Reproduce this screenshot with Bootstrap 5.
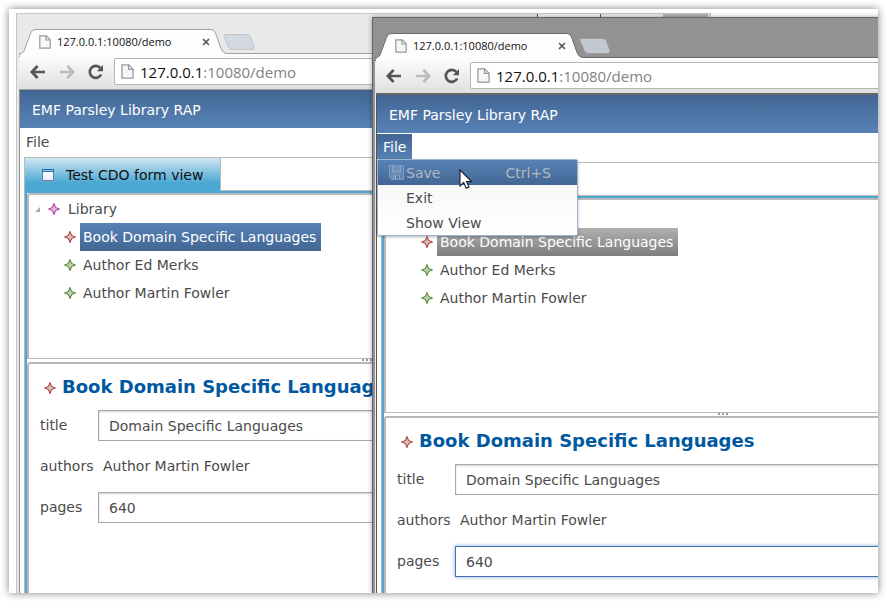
<!DOCTYPE html>
<html lang="en">
<head>
<meta charset="utf-8">
<meta name="viewport" content="width=device-width, initial-scale=1">
<title>EMF Parsley Library RAP</title>
<link href="https://cdn.jsdelivr.net/npm/bootstrap@5.3.0/dist/css/bootstrap.min.css" rel="stylesheet">
<style>
  :root { --line: #b9b9b9; --accent: #4ba8d3; --deep: #426694; --bright: #5882b5; }
  body { font: 14px/20px "DejaVu Sans", Verdana, sans-serif; color: #4b4b4b; background: #fff; padding: 9px 8px 8px 9px; }
  button { font: inherit; color: inherit; background: none; border: 0; padding: 0; }
  svg { display: block; flex: none; }

  .desk { background: #fff; box-shadow: 0 0 8px rgba(0,0,0,.5); }
  .win { position: absolute; width: 80%; bottom: 0; border: 1px solid var(--edge); border-bottom: 0; background: var(--frame); padding: 0 2px; }
  .win-back { left: 7px; top: 4px; --edge: #c6c6c6; --frame: #e9e9e9; --tabline: #a0a0a0; --knob: #d3d9e1; --knobline: #c0c4ca; --tree: 164px; }
  .win-front { left: 363px; top: 8px; --edge: #666; --frame: #929292; --tabline: #6c6c6c; --knob: #c3c9d1; --knobline: #9a9ea4; --tree: 213px; box-shadow: 0 0 5px rgba(0,0,0,.35); }

  /* browser chrome */
  .strip { height: 39px; padding-top: 15px; }
  .page-tab { width: 204px; height: 25px; margin-bottom: -1px; z-index: 1; padding: 0 13px 0 20px; font: 11px/24px "Open Sans", sans-serif; color: #111; gap: 6px; }
  .tab-shape { position: absolute; left: 0; top: 0; color: var(--tabline); }
  .tab-icon, .tab-text, .tab-close { position: relative; }
  .win-controls { height: 12px; margin-top: -15px; }
  .win-controls span { width: 63px; border-left: 1px solid #555; background: #ededed; }
  .win-controls span:last-child { width: 45px; border: 0; background: #b5b5b5; }
  .win-controls span:first-child { background: #f4f4f4; }
  .toolbar { height: 36px; border-top: 1px solid var(--tabline); background: linear-gradient(#fdfdfd, #e0e0e0); padding: 0 8px 0 11px; gap: 13px; }
  .omni { height: 27px; margin-left: -3px; border: 1px solid #b5b5b5; border-radius: 2px; background: #fff; padding-left: 6px; gap: 6px; font: 15px/24px "Open Sans", sans-serif; color: #828282; }
  .omni b { font-weight: 400; color: #111; }

  /* application */
  .app { background: #fff; border-top: 1px solid #a0a0a0; border-left: 1px solid #8f8f8f; }
  .win-front .app { border-top: 2px solid #666; border-left: 1px solid #555; box-shadow: -1px 0 #eee; margin-left: 1px; }
  .banner { height: 38px; padding-left: 12px; line-height: 40px; color: #fff; background: linear-gradient(var(--deep), var(--bright)); }
  .menubar { height: 29px; padding-top: 1px; }
  .menubar > button { height: 25px; padding: 0 6px; }
  .menubar > button[aria-expanded=true] { color: #fff; background: linear-gradient(var(--deep), var(--bright)); }
  .popup { position: absolute; left: 0; top: 26px; z-index: 3; width: 201px; border: 1px solid #9fb3cd; border-radius: 2px; background: linear-gradient(#f4f4f4, #fff); box-shadow: 0 1px 3px rgba(0,0,0,.3); }
  .popup button { display: flex; align-items: center; width: 100%; height: 25px; padding: 0 26px 0 28px; }
  .popup button:disabled { padding-left: 11px; gap: 2px; color: #b4b8be; background: linear-gradient(var(--bright), var(--deep)); }
  .pointer { position: absolute; left: 82px; top: 36px; z-index: 4; }

  .folder { margin-left: 4px; border-top: 1px solid var(--line); border-left: 1px solid var(--line); }
  .folder-strip { height: 33px; }
  .view-tab { width: 196px; padding-left: 17px; gap: 12px; border-right: 1px solid var(--line); color: #111; background: linear-gradient(#d0e6f1, var(--accent) 75%); }
  .view-tab + div { border-bottom: 1px solid var(--line); }
  .views { border-top: 2px solid var(--accent); border-left: 2px solid var(--accent); }
  .tree { height: calc(var(--tree) + 2px); border: 2px solid var(--line); border-width: 2px 0 1px 2px; border-radius: 3px 0 0 0; }
  .node { height: 28px; padding-left: 35px; gap: 4px; }
  .node:first-child { padding-left: 6px; gap: 8px; }
  .node .name { padding: 0 5px 0 3px; line-height: 28px; }
  .node.picked .name { color: #fff; background: linear-gradient(var(--bright), var(--deep)); }
  .win-front .node.picked .name { background: linear-gradient(#b0b0b0, #7e7e7e); }
  .sash { height: 3px; gap: 2px; padding-right: 2px; }
  .sash i { width: 2px; height: 2px; background: #999; }
  .details { border: 2px solid var(--line); border-width: 2px 0 0 2px; border-radius: 3px 0 0 0; padding: 0 12px 0 11px; }
  .details h1 { height: 46px; margin: 0; padding-left: 4px; gap: 6px; font-size: 18px; line-height: 44px; font-weight: 700; color: #00589f; }
  .details h1 svg { margin-top: 2px; }
  .fields { display: grid; grid-template-columns: 58px 1fr; gap: 10px 0; }
  .fields > * { height: 31px; line-height: 30px; }
  .fields input { min-width: 0; border: 1px solid #a7a7a7; border-radius: 0; padding: 0 10px; color: #4b4b4b; background: #fff; box-shadow: inset 0 1px 2px rgba(0,0,0,.18); outline: 0; }
  .fields input.active { border-color: #4474b0; box-shadow: 0 0 4px #7fa4d6; }
  .fields output { padding-left: 5px; }
</style>
</head>
<body class="vh-100 d-flex">
<svg width="0" height="0" class="position-absolute" aria-hidden="true">
  <defs>
    <linearGradient id="sheet" x1="0" y1="0" x2="0" y2="1"><stop offset="0" stop-color="#fff"/><stop offset="1" stop-color="#e6eef8"/></linearGradient>
    <symbol id="page" viewBox="0 0 12 14"><path d="M.8.8h6.4l4 4v8.4H.8z" fill="#f6f6f6" stroke="#999" stroke-width="1.2"/><path d="M7 .8v4.2h4.2" fill="none" stroke="#999" stroke-width="1.2"/></symbol>
    <symbol id="star" viewBox="0 0 12 12"><path d="M6 .6 7.6 4.400 11.4 6 7.6 7.600 6 11.4 4.4 7.600.6 6 4.4 4.400z" fill="currentColor" fill-opacity=".4" stroke="currentColor" stroke-width="1.1"/><path d="M6 3.500 8.500 6 6 8.500 3.500 6z" fill="#c9c6bf" fill-opacity=".8"/></symbol>
    <symbol id="arrow" viewBox="0 0 16 14"><path d="M7.6 1 1.8 7l5.8 6M2 7h13" fill="none" stroke="currentColor" stroke-width="2.7"/></symbol>
    <symbol id="reload" viewBox="0 0 16 16"><path d="M13.2 10.5A6 6 0 1 1 12.4 4" fill="none" stroke="currentColor" stroke-width="2.7"/><path d="M15 1v6.2H8.8z" fill="currentColor"/></symbol>
    <symbol id="cross" viewBox="0 0 8 8"><path d="m1 1 6 6M7 1 1 7" stroke="#555" stroke-width="1.7"/></symbol>
    <symbol id="tabshape" viewBox="0 0 214 28"><path d="M0 28V26.5C0 24 4 24.5 5 22L11.5 4.5Q13 .5 16 .5H192Q195 .5 196.500 4L202 19.5Q204 24.5 208 24.5V28z" fill="#fdfdfd"/><path d="M.5 28V26.5C.5 24 4 24.5 5 22L11.5 4.5Q13 .5 16 .5H192Q195 .5 196.500 4L202 19.5Q204 24.5 208 24.5" fill="none" stroke="currentColor"/></symbol>
    <symbol id="view" viewBox="0 0 12 12"><path d="M.5.5h11v11H.5z" fill="url(#sheet)" stroke="#6f7f90"/><path d="M0 0h12v3H0z" fill="#2667b8"/><path d="M1 1.500h10" stroke="#9cc4ef" stroke-width="1"/></symbol>
  </defs>
</svg>

<main class="desk position-relative overflow-hidden flex-grow-1">
  <section class="win win-back d-flex flex-column" aria-label="Browser window, 127.0.0.1:10080/demo">
    <div class="strip d-flex">
      <div class="page-tab position-relative d-flex align-items-center">
        <svg class="tab-shape" width="214" height="28"><use href="#tabshape"/></svg>
        <svg class="tab-icon" width="12" height="14"><use href="#page"/></svg>
        <span class="tab-text flex-grow-1 text-nowrap">127.0.0.1:10080/demo</span>
        <button class="tab-close" type="button" aria-label="Close tab"><svg width="8" height="8"><use href="#cross"/></svg></button>
      </div>
      <button type="button" class="align-self-start mt-1" aria-label="New tab"><svg width="32" height="18" viewBox="0 0 32 18"><path d="M2 .5H23Q26 .5 27 3L30.5 13Q31 15.5 28 15.5H9Q6 15.5 5 13L.5 2.5Q0 .5 2 .5z" transform="translate(.5 1)" fill="var(--knob)" stroke="var(--knobline)"/></svg></button>
      <div class="win-controls d-flex ms-auto"><span></span><span></span><span></span></div>
    </div>
    <div class="toolbar d-flex align-items-center">
      <button type="button" aria-label="Back"><svg width="16" height="14" color="#555"><use href="#arrow"/></svg></button>
      <button type="button" aria-label="Forward"><svg width="16" height="14" color="#bbb" viewBox="0 0 16 14"><use href="#arrow" transform="matrix(-1 0 0 1 16 0)" width="16" height="14"/></svg></button>
      <button type="button" aria-label="Reload"><svg width="16" height="16" color="#555"><use href="#reload"/></svg></button>
      <div class="omni d-flex align-items-center flex-grow-1"><svg width="13" height="15"><use href="#page"/></svg><span><b>127.0.0.1</b>:10080/demo</span></div>
    </div>
    <div class="app flex-grow-1 d-flex flex-column">
      <header class="banner">EMF Parsley Library RAP</header>
      <nav class="menubar position-relative" aria-label="Main menu"><button type="button">File</button></nav>
      <div class="folder flex-grow-1 d-flex flex-column">
        <div class="folder-strip d-flex">
          <button type="button" class="view-tab d-flex align-items-center"><svg width="12" height="12"><use href="#view"/></svg><span class="text-nowrap">Test CDO form view</span></button>
          <div class="flex-grow-1"></div>
        </div>
        <div class="views flex-grow-1 d-flex flex-column">
          <div class="tree">
            <div class="node d-flex align-items-center"><svg width="5" height="5"><path d="M5 0v5H0z" fill="#aaa"/></svg><svg width="12" height="12" color="#b23fae"><use href="#star"/></svg><span>Library</span></div>
            <div class="node picked d-flex align-items-center"><svg width="12" height="12" color="#b5423f"><use href="#star"/></svg><span class="name">Book Domain Specific Languages</span></div>
            <div class="node d-flex align-items-center"><svg width="12" height="12" color="#568c33"><use href="#star"/></svg><span class="name">Author Ed Merks</span></div>
            <div class="node d-flex align-items-center"><svg width="12" height="12" color="#568c33"><use href="#star"/></svg><span class="name">Author Martin Fowler</span></div>
          </div>
          <div class="sash d-flex justify-content-center"><i></i><i></i><i></i></div>
          <form class="details flex-grow-1">
            <h1 class="d-flex align-items-center text-nowrap"><svg width="12" height="12" color="#b5423f"><use href="#star"/></svg>Book Domain Specific Languages</h1>
            <div class="fields">
              <label for="title1">title</label><input id="title1" type="text" value="Domain Specific Languages">
              <label for="authors1">authors</label><output id="authors1">Author Martin Fowler</output>
              <label for="pages1">pages</label><input id="pages1" type="text" value="640">
            </div>
          </form>
        </div>
      </div>
    </div>
  </section>

  <section class="win win-front d-flex flex-column" aria-label="Browser window with open File menu">
    <div class="strip d-flex">
      <div class="page-tab position-relative d-flex align-items-center">
        <svg class="tab-shape" width="214" height="28"><use href="#tabshape"/></svg>
        <svg class="tab-icon" width="12" height="14"><use href="#page"/></svg>
        <span class="tab-text flex-grow-1 text-nowrap">127.0.0.1:10080/demo</span>
        <button class="tab-close" type="button" aria-label="Close tab"><svg width="8" height="8"><use href="#cross"/></svg></button>
      </div>
      <button type="button" class="align-self-start mt-1" aria-label="New tab"><svg width="32" height="18" viewBox="0 0 32 18"><path d="M2 .5H23Q26 .5 27 3L30.5 13Q31 15.5 28 15.5H9Q6 15.5 5 13L.5 2.5Q0 .5 2 .5z" transform="translate(.5 1)" fill="var(--knob)" stroke="var(--knobline)"/></svg></button>
    </div>
    <div class="toolbar d-flex align-items-center">
      <button type="button" aria-label="Back"><svg width="16" height="14" color="#555"><use href="#arrow"/></svg></button>
      <button type="button" aria-label="Forward"><svg width="16" height="14" color="#bbb" viewBox="0 0 16 14"><use href="#arrow" transform="matrix(-1 0 0 1 16 0)" width="16" height="14"/></svg></button>
      <button type="button" aria-label="Reload"><svg width="16" height="16" color="#555"><use href="#reload"/></svg></button>
      <div class="omni d-flex align-items-center flex-grow-1"><svg width="13" height="15"><use href="#page"/></svg><span><b>127.0.0.1</b>:10080/demo</span></div>
    </div>
    <div class="app flex-grow-1 d-flex flex-column">
      <header class="banner">EMF Parsley Library RAP</header>
      <nav class="menubar position-relative" aria-label="Main menu">
        <button type="button" aria-expanded="true">File</button>
        <div class="popup">
          <button type="button" disabled><svg width="15" height="15" viewBox="0 0 15 15"><path d="M.5.5h14v14h-12l-2-2z" fill="#6486b3" stroke="#7c9ac2"/><path d="M3.5 1v6h8V1" fill="#7291bb" stroke="#8ea8cb"/><path d="M4.5 14v-4h6v4" fill="#55779f" stroke="#8ea8cb"/><path d="M6.5 11v3" stroke="#a9bcd6" stroke-width="1.5"/></svg>Save<span class="ms-auto">Ctrl+S</span></button>
          <button type="button">Exit</button>
          <button type="button">Show View</button>
        </div>
        <svg class="pointer" width="14" height="21" viewBox="0 0 14 21"><path d="M1 1v16l3.7-3.5 2.500 5.800 2.800-1.200-2.500-5.600h5z" fill="#fff" stroke="#1a1a2a" stroke-width="1.1"/></svg>
      </nav>
      <div class="folder flex-grow-1 d-flex flex-column">
        <div class="folder-strip d-flex">
          <div class="view-tab"></div>
          <div class="flex-grow-1"></div>
        </div>
        <div class="views flex-grow-1 d-flex flex-column">
          <div class="tree">
            <div class="node"></div>
            <div class="node picked d-flex align-items-center"><svg width="12" height="12" color="#b5423f"><use href="#star"/></svg><span class="name">Book Domain Specific Languages</span></div>
            <div class="node d-flex align-items-center"><svg width="12" height="12" color="#568c33"><use href="#star"/></svg><span class="name">Author Ed Merks</span></div>
            <div class="node d-flex align-items-center"><svg width="12" height="12" color="#568c33"><use href="#star"/></svg><span class="name">Author Martin Fowler</span></div>
          </div>
          <div class="sash d-flex justify-content-center"><i></i><i></i><i></i></div>
          <form class="details flex-grow-1">
            <h1 class="d-flex align-items-center text-nowrap"><svg width="12" height="12" color="#b5423f"><use href="#star"/></svg>Book Domain Specific Languages</h1>
            <div class="fields">
              <label for="title2">title</label><input id="title2" type="text" value="Domain Specific Languages">
              <label for="authors2">authors</label><output id="authors2">Author Martin Fowler</output>
              <label for="pages2">pages</label><input id="pages2" class="active" type="text" value="640">
            </div>
          </form>
        </div>
      </div>
    </div>
  </section>
</main>
<script src="https://cdn.jsdelivr.net/npm/bootstrap@5.3.0/dist/js/bootstrap.bundle.min.js"></script>
</body>
</html>
